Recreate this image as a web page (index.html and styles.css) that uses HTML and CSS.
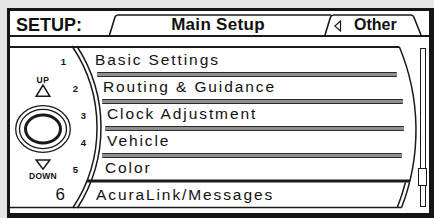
FILE: index.html
```html
<!DOCTYPE html>
<html lang="en">
<head>
    <meta charset="UTF-8">
    <title>SETUP - Main Setup</title>
    <link rel="stylesheet" href="styles.css">
</head>
<body>
    <div class="screen">
        <!-- title bar with the two tabs -->
        <div class="head">
            <svg class="tabs" width="419" height="24" viewBox="10 11 419 24">
                <path d="M109.5,35 L115,17 Q115.8,15 118,15 H331"/>
                <path d="M325,35 L330.5,17 Q331.3,15 333.5,15 H411 Q413,15 413.8,17 L421,35"/>
            </svg>
            <div class="title">SETUP:</div>
            <div class="tab tab-main">Main Setup</div>
            <div class="tab tab-other">
                <svg class="back" width="8" height="12" viewBox="0 0 8 12"><path d="M6.5,1 L0.8,6 L6.5,11 Z"/></svg>
                <span>Other</span>
            </div>
        </div>

        <div class="panel">
            <div class="row"><div class="line"><span class="num">1</span><span class="label">Basic Settings</span></div></div>
            <div class="row"><div class="line"><span class="num">2</span><span class="label">Routing &amp; Guidance</span></div></div>
            <div class="row"><div class="line"><span class="num">3</span><span class="label">Clock Adjustment</span></div></div>
            <div class="row"><div class="line"><span class="num">4</span><span class="label">Vehicle</span></div></div>
            <div class="row"><div class="line"><span class="num">5</span><span class="label">Color</span></div></div>
            <div class="row sel"><div class="line"><span class="num">6</span><span class="label">AcuraLink/Messages</span></div></div>

            <!-- interface dial -->
            <div class="dial">
                <div class="dial-text">UP</div>
                <svg width="16" height="13" viewBox="0 0 16 13"><path d="M8,1 L1.2,12.3 L14.8,12.3 Z"/></svg>
                <svg class="knob" width="60" height="52" viewBox="0 0 60 52">
                    <ellipse cx="30" cy="26" rx="27.3" ry="23.3"/>
                    <ellipse cx="30" cy="26" rx="23.5" ry="19.6"/>
                    <ellipse class="thick" cx="30" cy="26" rx="17.5" ry="14"/>
                </svg>
                <svg class="down-arrow" width="16" height="11" viewBox="0 0 16 11"><path d="M1.2,1 L14.8,1 L8,10.2 Z"/></svg>
                <div class="dial-text down-text">DOWN</div>
            </div>

            <div class="scroll"><div class="thumb"></div></div>

            <!-- curved outline of the list and the highlighted row -->
            <svg class="frame" width="419" height="163" viewBox="10 46 419 163">
                <path class="top" d="M10,47 H399.4"/>
                <path d="M399.4,47 A216,216 0 0 1 401.6,207.5"/>
                <path d="M72,46 A145.3,145.3 0 0 1 72.7,208"/>
                <path d="M76.8,46 A149.3,149.3 0 0 1 77.4,208"/>
                <path class="hl" d="M87,181 H410"/>
                <path d="M405.4,182.5 A212,212 0 0 1 397.3,207.5"/>
                <path d="M10,207.5 H401.6"/>
            </svg>
        </div>
    </div>
</body>
</html>
```

FILE: styles.css
```css
* {
    box-sizing: border-box;
}
body {
    margin: 0;
    background-color: #e6e6e6;
    font-family: "Liberation Sans", Arial, sans-serif;
    color: #111;
}
.screen {
    width: 427px;
    height: 210px;
    margin: 8px 0 0 7px;
    border: 3px solid #151515;
    border-right-width: 5px;
    border-bottom-width: 5px;
    background-color: #fff;
}

/* header */
.head {
    display: grid;
    grid-template-columns: 100px 216px 1fr;
    grid-template-rows: 24px;
    border-bottom: 2px solid #1a1a1a;
}
.tabs {
    grid-column: 1 / -1;
    grid-row: 1;
    overflow: visible;
    fill: none;
    stroke: #1a1a1a;
    stroke-width: 1.6;
}
.title {
    grid-column: 1;
    grid-row: 1;
    padding-left: 6px;
    font-size: 18px;
    font-weight: bold;
    line-height: 28px;
}
.tab {
    grid-row: 1;
    font-weight: bold;
    line-height: 28px;
}
.tab-main {
    grid-column: 2;
    text-align: center;
    font-size: 17px;
    letter-spacing: 0.3px;
}
.tab-other {
    grid-column: 3;
    display: flex;
    align-items: flex-start;
    font-size: 16px;
}
.back {
    margin: 9px 0 0 8px;
    fill: none;
    stroke: #1a1a1a;
    stroke-width: 1.2;
}
.tab-other span {
    margin-left: 12px;
}

/* list area */
.panel {
    display: grid;
    grid-template-columns: 419px;
    grid-template-rows: 2px repeat(5, 27px) 26px;
    margin-top: 9px;
}
.row {
    grid-column: 1;
}
.row:nth-child(1) { grid-row: 2; --n: 56px; --t: 85px; --s: 87px; --e: 387px; }
.row:nth-child(2) { grid-row: 3; --n: 68px; --t: 93px; --s: 92px; --e: 393px; }
.row:nth-child(3) { grid-row: 4; --n: 76px; --t: 97px; --s: 95px; --e: 394px; }
.row:nth-child(4) { grid-row: 5; --n: 76px; --t: 97px; --s: 92px; --e: 392px; }
.row:nth-child(5) { grid-row: 6; --n: 68px; --t: 95px; }
.row:nth-child(6) { grid-row: 7; --n: 55px; --t: 86px; }
.line {
    display: flex;
    align-items: baseline;
    height: 24px;
    line-height: 24px;
}
.num {
    flex: none;
    width: var(--n);
    text-align: right;
    font-size: 9.5px;
    font-weight: bold;
}
.sel .num {
    font-size: 17px;
    font-weight: normal;
}
.label {
    margin-left: calc(var(--t) - var(--n));
    font-size: 15.5px;
    letter-spacing: 1.9px;
    white-space: nowrap;
}
.row::after {
    content: "";
    display: block;
    margin-left: var(--s);
    width: calc(var(--e) - var(--s));
    height: 3px;
    background-color: #8f8f8f;
    border-top: 1px solid #2b2b2b;
    border-bottom: 1px solid #2b2b2b;
    border-radius: 1px;
}
.row:nth-child(5)::after,
.row:nth-child(6)::after {
    display: none;
}

/* dial on the left */
.dial {
    grid-column: 1;
    grid-row: 2 / -1;
    justify-self: start;
    width: 66px;
    display: flex;
    flex-direction: column;
    align-items: center;
}
.dial svg {
    fill: none;
    stroke: #1a1a1a;
    stroke-width: 1.5;
}
.dial-text {
    margin-top: 28px;
    font-size: 8.5px;
    font-weight: bold;
    line-height: 8px;
    letter-spacing: 0.6px;
}
.knob {
    margin-top: 6px;
}
.knob ellipse {
    stroke-width: 1.3;
}
.knob .thick {
    stroke-width: 3;
}
.down-arrow {
    margin-top: 4px;
}
.down-text {
    margin-top: 2px;
    letter-spacing: 0.3px;
}

/* scrollbar */
.scroll {
    grid-column: 1;
    grid-row: 2 / -1;
    justify-self: end;
    width: 6px;
    margin: 0 3px 2px 0;
    border: 1.5px solid #1a1a1a;
}
.thumb {
    width: 9px;
    height: 18px;
    margin: 118.5px 0 0 -3.5px;
    border: 1.5px solid #1a1a1a;
    background-color: #fff;
}

.frame {
    grid-column: 1;
    grid-row: 1 / -1;
    overflow: visible;
    fill: none;
    stroke: #1a1a1a;
    stroke-width: 1.5;
}
.frame .top {
    stroke-width: 2;
}
.frame .hl {
    stroke-width: 3;
}
```
